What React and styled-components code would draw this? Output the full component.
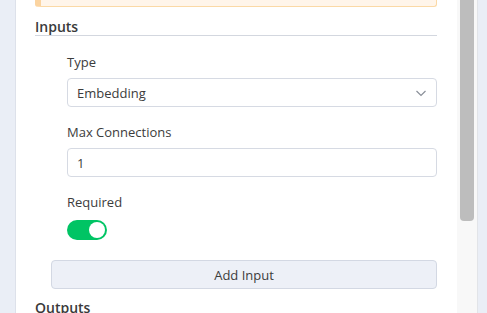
import styled, { createGlobalStyle } from 'styled-components'

const GlobalStyle = createGlobalStyle`
  html, body {
    margin: 0;
    padding: 0;
    background: #eaeef6;
    font-family: "Open Sans", "Liberation Sans", sans-serif;
    color: #3c3c3c;
    overflow: hidden;
  }
`

const Page = styled.div`
  display: flex;
  height: 313px;
  width: 487px;
  overflow: hidden;
`

const Gutter = styled.div`
  width: 15px;
  flex-shrink: 0;
  background: #eaeef6;
`

const Panel = styled.div`
  display: flex;
  width: 442px;
  flex-shrink: 0;
  background: #ffffff;
  border-left: 1px solid #dde1ea;
  box-sizing: border-box;
`

const Content = styled.div`
  flex: 1;
  padding: 0 20px 0 19px;
`

const Warning = styled.div`
  height: 6px;
  background: #fff5ea;
  border: 1px solid #fbd9a6;
  border-top: none;
  border-left: 6px solid #fbd4a1;
  border-radius: 0 0 3px 3px;
`

const SectionTitle = styled.div`
  margin-top: 11px;
  font-size: 14px;
  font-weight: 600;
  line-height: 17px;
  border-bottom: 1px solid #d3d7df;
  color: #3a3a3a;
`

const Fields = styled.div`
  padding: 17px 0 0 32px;
  display: flex;
  flex-direction: column;
`

const Field = styled.div`
  display: flex;
  flex-direction: column;
  margin-bottom: ${p => p.$gap || 16}px;
`

const Label = styled.label`
  font-size: 13px;
  line-height: 18px;
  margin-bottom: ${p => p.$gap || 7}px;
  color: #3c3c3c;
`

const Control = styled.div`
  height: 29px;
  box-sizing: border-box;
  border: 1px solid #d6dae3;
  border-radius: 4px;
  display: flex;
  align-items: center;
  justify-content: space-between;
  padding: 0 9px 0 9px;
  font-size: 13px;
  color: #3c3c3c;
  background: #fff;
`

const Toggle = styled.div`
  width: 40px;
  height: 20px;
  border-radius: 10px;
  background: ${p => (p.$on ? '#00c464' : '#ccd1da')};
  display: flex;
  align-items: center;
  justify-content: ${p => (p.$on ? 'flex-end' : 'flex-start')};
  padding: 0 2px;
  box-sizing: border-box;
`

const Knob = styled.div`
  width: 16px;
  height: 16px;
  border-radius: 50%;
  background: #fff;
`

const AddButton = styled.button`
  margin-left: 16px;
  height: 29px;
  width: calc(100% - 16px);
  box-sizing: border-box;
  background: #edf0f7;
  border: 1px solid #d3d8e3;
  border-radius: 4px;
  font-family: inherit;
  font-size: 13px;
  color: #3c3c3c;
`

const NextTitle = styled.div`
  margin-top: 9px;
  font-size: 14px;
  font-weight: 600;
  line-height: 20px;
  color: #3a3a3a;
`

const Track = styled.div`
  width: 14px;
  flex-shrink: 0;
  background: #f8f8f8;
  border-right: 1px solid #e2e4e8;
  padding: 0 3px 0 3px;
`

const Thumb = styled.div`
  height: 221px;
  background: #bdbdbd;
  border-radius: 0 0 4px 4px;
`

const Backdrop = styled.div`
  flex: 1;
  background: #eaeef6;
`

const Chevron = () => (
  <svg width="12" height="12" viewBox="0 0 12 12" fill="none">
    <path d="M1.5 4 L6 8.5 L10.5 4" stroke="#8a8f99" strokeWidth="1.2" />
  </svg>
)

const App = () => {
  return (
    <Page>
      <GlobalStyle />
      <Gutter />
      <Panel>
        <Content>
          <Warning />
          <SectionTitle>Inputs</SectionTitle>
          <Fields>
            <Field>
              <Label>Type</Label>
              <Control>
                <span>Embedding</span>
                <Chevron />
              </Control>
            </Field>
            <Field>
              <Label>Max Connections</Label>
              <Control>
                <span>1</span>
              </Control>
            </Field>
            <Field $gap={20}>
              <Label $gap={9}>Required</Label>
              <Toggle $on>
                <Knob />
              </Toggle>
            </Field>
          </Fields>
          <AddButton>Add Input</AddButton>
          <NextTitle>Outputs</NextTitle>
        </Content>
      </Panel>
      <Track>
        <Thumb />
      </Track>
      <Backdrop />
    </Page>
  )
}

export default App
